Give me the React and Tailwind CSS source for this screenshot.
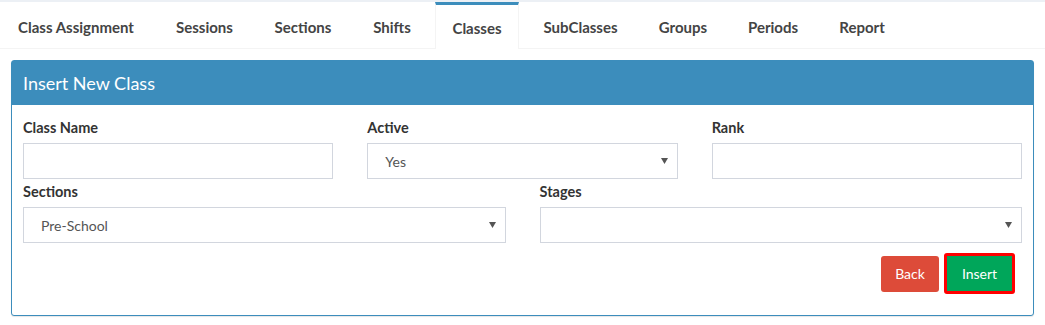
import React from "react";

const tabs = [
  { label: "Class Assignment", w: "w-[152px]" },
  { label: "Sessions", w: "w-[93px]" },
  { label: "Sections", w: "w-[92px]" },
  { label: "Shifts", w: "w-[74px]" },
  { label: "Classes", w: "w-[84px]", active: true },
  { label: "SubClasses", w: "w-[111px]" },
  { label: "Groups", w: "w-[82px]" },
  { label: "Periods", w: "w-[86px]" },
  { label: "Report", w: "w-[80px]" },
];

function Arrow() {
  return (
    <svg width="7" height="6" viewBox="0 0 7 6" className="shrink-0">
      <path d="M0 0 L7 0 L3.5 6 Z" fill="#555" />
    </svg>
  );
}

function Label({ children }) {
  return (
    <div className="h-[20px] leading-[20px] text-[14.5px] font-bold text-[#333]">{children}</div>
  );
}

function Input() {
  return <div className="mt-[5px] h-[36px] border border-[#d2d6de] bg-white" />;
}

function Select({ value }) {
  return (
    <div className="mt-[5px] h-[36px] border border-[#d2d6de] bg-white flex items-center pl-[17px] pr-[9px]">
      <span className="flex-1 text-[14px] text-[#555]">{value}</span>
      <Arrow />
    </div>
  );
}

export default function App() {
  return (
    <div
      className="w-[1045px] h-[325px] bg-white overflow-hidden"
      style={{ fontFamily: "Lato, 'Noto Sans', sans-serif" }}
    >
      <div className="h-[2px] bg-[#ecf0f5]" />
      <div className="h-[47px] flex gap-[6px] border-b border-[#f4f4f4] bg-white">
        {tabs.map((t) => (
          <div
            key={t.label}
            className={
              t.w +
              " flex items-center justify-center text-[15px] font-bold text-[#444] " +
              (t.active
                ? "border-t-[3px] border-t-[#3c8dbc] border-x border-x-[#f4f4f4] bg-white -mb-px pt-[2px]"
                : "pt-[5px]")
            }
          >
            {t.label}
          </div>
        ))}
      </div>
      <div className="pt-[11px] px-[11px]">
        <div className="border border-[#3c8dbc] rounded-[3px] shadow-[0_1px_1px_rgba(0,0,0,0.1)] bg-white">
          <div className="h-[44px] bg-[#3c8dbc] flex items-center px-[11px] text-white text-[18px]">
            Insert New Class
          </div>
          <div className="px-[11px] pt-[13px] pb-[21px]">
            <div className="grid grid-cols-3 gap-x-[34px]">
              <div>
                <Label>Class Name</Label>
                <Input />
              </div>
              <div>
                <Label>Active</Label>
                <Select value="Yes" />
              </div>
              <div>
                <Label>Rank</Label>
                <Input />
              </div>
            </div>
            <div className="grid grid-cols-2 gap-x-[34px] mt-[3px]">
              <div>
                <Label>Sections</Label>
                <Select value="Pre-School" />
              </div>
              <div>
                <Label>Stages</Label>
                <Select value="" />
              </div>
            </div>
            <div className="mt-[10px] flex justify-end items-center gap-[5px] pr-[7px]">
              <button className="h-[36px] w-[58px] rounded-[3px] bg-[#dd4b39] text-white text-[14px]">
                Back
              </button>
              <button className="h-[41px] w-[71px] rounded-[3px] border-[3px] border-[#ff0000] bg-[#00a65a] text-white text-[14px]">
                Insert
              </button>
            </div>
          </div>
        </div>
      </div>
    </div>
  );
}
